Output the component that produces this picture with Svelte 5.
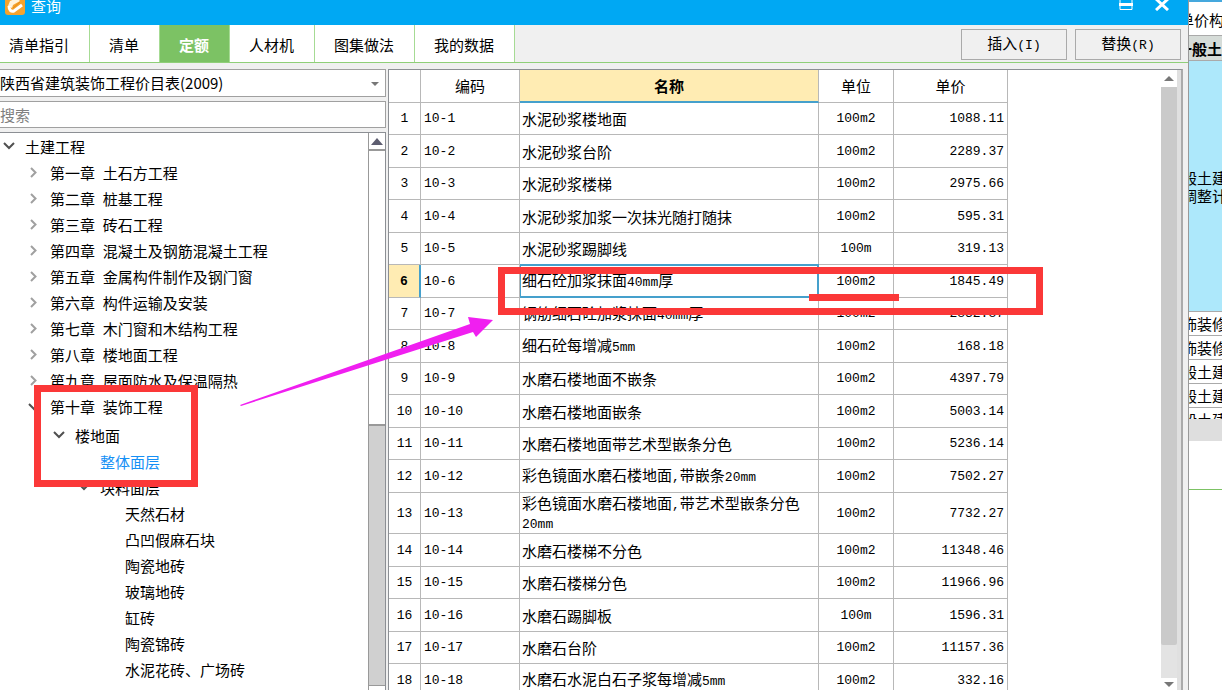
<script lang="ts">
  type Node = { label: string; open?: boolean; leaf?: boolean; children?: Node[] };

  const tabs = ['清单指引', '清单', '定额', '人材机', '图集做法', '我的数据'];
  let activeTab = $state('定额');
  let selectedNode = $state('整体面层');
  let selectedRow = $state(6);
  let search = $state('');

  let tree: Node[] = $state([
    {
      label: '土建工程',
      open: true,
      children: [
        { label: '第一章 土石方工程' },
        { label: '第二章 桩基工程' },
        { label: '第三章 砖石工程' },
        { label: '第四章 混凝土及钢筋混凝土工程' },
        { label: '第五章 金属构件制作及钢门窗' },
        { label: '第六章 构件运输及安装' },
        { label: '第七章 木门窗和木结构工程' },
        { label: '第八章 楼地面工程' },
        { label: '第九章 屋面防水及保温隔热' },
        {
          label: '第十章 装饰工程',
          open: true,
          children: [
            {
              label: '楼地面',
              open: true,
              children: [
                { label: '整体面层', leaf: true },
                {
                  label: '块料面层',
                  open: true,
                  children: [
                    { label: '天然石材', leaf: true },
                    { label: '凸凹假麻石块', leaf: true },
                    { label: '陶瓷地砖', leaf: true },
                    { label: '玻璃地砖', leaf: true },
                    { label: '缸砖', leaf: true },
                    { label: '陶瓷锦砖', leaf: true },
                    { label: '水泥花砖、广场砖', leaf: true },
                  ],
                },
              ],
            },
          ],
        },
      ],
    },
  ]);

  const rows = [
    { name: '水泥砂浆楼地面', unit: '100m2', price: '1088.11' },
    { name: '水泥砂浆台阶', unit: '100m2', price: '2289.37' },
    { name: '水泥砂浆楼梯', unit: '100m2', price: '2975.66' },
    { name: '水泥砂浆加浆一次抹光随打随抹', unit: '100m2', price: '595.31' },
    { name: '水泥砂浆踢脚线', unit: '100m', price: '319.13' },
    { name: '细石砼加浆抹面40mm厚', unit: '100m2', price: '1845.49' },
    { name: '钢筋细石砼加浆抹面40mm厚', unit: '100m2', price: '2832.87' },
    { name: '细石砼每增减5mm', unit: '100m2', price: '168.18' },
    { name: '水磨石楼地面不嵌条', unit: '100m2', price: '4397.79' },
    { name: '水磨石楼地面嵌条', unit: '100m2', price: '5003.14' },
    { name: '水磨石楼地面带艺术型嵌条分色', unit: '100m2', price: '5236.14' },
    { name: '彩色镜面水磨石楼地面,带嵌条20mm', unit: '100m2', price: '7502.27' },
    { name: '彩色镜面水磨石楼地面,带艺术型嵌条分色20mm', unit: '100m2', price: '7732.27' },
    { name: '水磨石楼梯不分色', unit: '100m2', price: '11348.46' },
    { name: '水磨石楼梯分色', unit: '100m2', price: '11966.96' },
    { name: '水磨石踢脚板', unit: '100m', price: '1596.31' },
    { name: '水磨石台阶', unit: '100m2', price: '11157.36' },
    { name: '水磨石水泥白石子浆每增减5mm', unit: '100m2', price: '332.16' },
  ];

  // half-width runs get the mono face, the rest stays in the CJK one
  function split(text: string) {
    return text.match(/[\x20-\x7e]+|[^\x20-\x7e]+/g) ?? [];
  }
</script>

{#snippet mixed(text: string)}
  {#each split(text) as part}{#if /^[\x20-\x7e]/.test(part)}<span class="half">{part}</span>{:else}{part}{/if}{/each}
{/snippet}

{#snippet branch(nodes: Node[])}
  <ul>
    {#each nodes as node}
      <li>
        <div class="node">
          {#if node.leaf}
            <span class="toggle"></span>
          {:else}
            <button class="toggle" class:open={node.open} aria-label="展开 {node.label}" onclick={() => (node.open = !node.open)}>
              <svg width="12" height="12" viewBox="0 0 12 12">
                {#if node.open}
                  <path d="M1 3 6 8 11 3" />
                {:else}
                  <path d="M3 1 7.5 5.5 3 10" />
                {/if}
              </svg>
            </button>
          {/if}
          <button class="label" class:selected={selectedNode === node.label} onclick={() => (selectedNode = node.label)}>
            {@render mixed(node.label)}
          </button>
        </div>
        {#if node.open && node.children}
          {@render branch(node.children)}
        {/if}
      </li>
    {/each}
  </ul>
{/snippet}

<div class="screen">
  <section class="dialog">
    <header class="titlebar">
      <svg class="logo" width="20" height="16" viewBox="0 4 20 16">
        <rect x="0" y="0" width="20" height="19" rx="3" fill="#f6a32c" />
        <path d="M3 10 5 5 12 2 15 5 8 9 7 12z" fill="#fff3dc" />
        <path d="M4 10C4 14 6 16 9 15L17 9" fill="none" stroke="#fff" stroke-width="3" />
        <path d="M8 12 15 6" stroke="#e58a1a" stroke-width="1" />
      </svg>
      <span class="title">查询</span>
      <div class="window-buttons">
        <button aria-label="最大化">
          <svg width="14" height="11" viewBox="0 0 14 11">
            <path d="M1 0V9.5H13V0" fill="none" stroke="#fff" stroke-width="1" />
            <path d="M0 4.5H14" stroke="#fff" stroke-width="3" />
          </svg>
        </button>
        <button aria-label="关闭">
          <svg width="14" height="11" viewBox="0 0 14 11">
            <path d="M1-1 13 10M13-1 1 10" stroke="#fff" stroke-width="3" />
          </svg>
        </button>
      </div>
    </header>

    <nav class="toolbar">
      {#each tabs as tab}
        <button class="tab" class:active={activeTab === tab} onclick={() => (activeTab = tab)}>{tab}</button>
      {/each}
      <div class="actions">
        <button>{@render mixed('插入(I)')}</button>
        <button>{@render mixed('替换(R)')}</button>
      </div>
    </nav>

    <div class="content">
      <aside class="sidebar">
        <div class="combo">
          <select aria-label="价目表">
            <option>陕西省建筑装饰工程价目表(2009)</option>
          </select>
          <svg width="8" height="5" viewBox="0 0 8 5"><path d="M0 0H8L4 4z" fill="#777" /></svg>
        </div>
        <input class="search" type="text" placeholder="搜索" aria-label="搜索" bind:value={search} />
        <div class="tree-box">
          <div class="tree">{@render branch(tree)}</div>
          <div class="tree-scroll">
            <button aria-label="向上滚动">
              <svg width="12" height="7" viewBox="0 0 12 7"><path d="M0 7 6 0 12 7z" fill="#5d5d70" /></svg>
            </button>
            <div class="tree-thumb"></div>
            <button class="down" aria-label="向下滚动"></button>
          </div>
        </div>
      </aside>

      <div class="grid">
        <div class="table-area">
          <table>
            <colgroup>
              <col class="c-num" />
              <col class="c-code" />
              <col class="c-name" />
              <col class="c-unit" />
              <col class="c-price" />
            </colgroup>
            <thead>
              <tr>
                <th></th>
                <th>编码</th>
                <th class="current">名称</th>
                <th>单位</th>
                <th>单价</th>
              </tr>
            </thead>
            <tbody>
              {#each rows as row, i}
                <tr class:selected={selectedRow === i + 1} onclick={() => (selectedRow = i + 1)}>
                  <td class="num half">{i + 1}</td>
                  <td class="half">10-{i + 1}</td>
                  <td class="name">{@render mixed(row.name)}</td>
                  <td class="unit half">{row.unit}</td>
                  <td class="price half">{row.price}</td>
                </tr>
              {/each}
            </tbody>
          </table>
        </div>
        <div class="grid-scroll">
          <button aria-label="表格向上滚动">
            <svg width="10" height="5" viewBox="0 0 10 5"><path d="M0 5 5 0 10 5z" fill="#777" /></svg>
          </button>
          <div class="grid-thumb"></div>
          <button class="down" aria-label="表格向下滚动">
            <svg width="10" height="5" viewBox="0 0 10 5"><path d="M0 0H10L5 5z" fill="#777" /></svg>
          </button>
        </div>
      </div>
    </div>
  </section>

  <section class="behind">
    <div class="b-head">单价构</div>
    <div class="b-group">一般土</div>
    <div class="b-current">
      <div>般土建</div>
      <div>调整计</div>
    </div>
    <div class="b-row">饰装修</div>
    <div class="b-row">饰装修</div>
    <div class="b-row">般土建</div>
    <div class="b-row">般土建</div>
    <div class="b-row cut">般土建</div>
    <div class="b-bar"></div>
    <div class="b-pane"></div>
  </section>

  <svg class="marks" width="1222" height="690" viewBox="0 0 1222 690">
    <g fill="none" stroke="#fb3838" stroke-width="7">
      <rect x="37.5" y="388.5" width="157" height="95" />
      <rect x="501.5" y="270.5" width="538" height="41" />
      <path d="M809 297.5H899" />
    </g>
    <path d="M240 405 385 354 470 324 468 317 493 320 476 337 473 332 385 360 241 406z" fill="#f01ff0" />
  </svg>
</div>

<style>
  :global(body) {
    overflow: hidden;
  }
  .screen {
    position: relative;
    display: flex;
    height: 100vh;
    overflow: hidden;
    background: #fff;
    color: #000;
    font-family: "Noto Sans CJK SC", sans-serif;
    font-size: 15px;
    line-height: 18px;
  }
  button,
  input,
  select {
    font: inherit;
    color: inherit;
    margin: 0;
    padding: 0;
    border: 0;
    border-radius: 0;
    background: none;
    outline: none;
  }
  svg {
    display: block;
  }
  .half {
    font-family: "Liberation Mono", "Noto Sans CJK SC", monospace;
    font-size: 13px;
    white-space: pre;
  }

  .dialog {
    flex: 1;
    min-width: 0;
    display: flex;
    flex-direction: column;
    background: #f0f0f0;
    border-right: 1px solid #999;
  }
  .titlebar {
    display: flex;
    align-items: flex-start;
    flex: none;
    height: 25px;
    padding: 0 19px 0 5px;
    background: #00a8f3;
    color: #fff;
  }
  .title {
    margin-left: 6px;
    line-height: 12px;
  }
  .window-buttons {
    display: flex;
    gap: 22px;
    margin-left: auto;
  }

  .toolbar {
    display: flex;
    flex: none;
    height: 37px;
    border-bottom: 1px solid #8fcf78;
  }
  .tab {
    padding: 2px 20px 0 19px;
    background: #fff;
    border-right: 1px solid #a6db94;
  }
  .tab:first-child {
    padding-left: 9px;
  }
  .tab.active {
    background: #7cc264;
    color: #fff;
    font-weight: bold;
  }
  .actions {
    display: flex;
    gap: 8px;
    margin: 4px 7px 2px auto;
  }
  .actions button {
    width: 106px;
    border: 1px solid #aaa;
  }

  .content {
    display: flex;
    flex: 1;
    min-height: 0;
    padding: 6px 5px 0 0;
  }
  .sidebar {
    display: flex;
    flex-direction: column;
    flex: none;
    width: 386px;
    gap: 4px;
  }
  .combo {
    position: relative;
    height: 28px;
    box-sizing: border-box;
    border: 1px solid #a0a0a0;
    border-left: 0;
    background: #fff;
  }
  .combo select {
    appearance: none;
    width: 100%;
    height: 100%;
  }
  .combo svg {
    position: absolute;
    right: 6px;
    top: 12px;
    pointer-events: none;
  }
  .search {
    height: 27px;
    box-sizing: border-box;
    border: 1px solid #a0a0a0;
    border-left: 0;
    background: #fff;
  }
  .search::placeholder {
    color: #808080;
    opacity: 1;
  }
  .tree-box {
    display: flex;
    flex: 1;
    min-height: 0;
    border: 1px solid #8c8f94;
    border-width: 1px 1px 0 0;
    background: #fff;
  }
  .tree {
    flex: 1;
    overflow: hidden;
  }
  ul {
    list-style: none;
    margin: 0;
    padding: 0;
  }
  ul ul {
    padding: 1px 0 0 25px;
  }
  ul ul ul {
    padding-top: 2px;
  }
  ul ul ul ul {
    padding-top: 0;
  }
  .node {
    display: flex;
    height: 26px;
  }
  .toggle {
    display: flex;
    align-items: center;
    flex: none;
    width: 25px;
    padding-left: 3px;
    box-sizing: border-box;
  }
  .toggle path {
    fill: none;
    stroke: #a0a0a0;
    stroke-width: 2;
  }
  .toggle.open path {
    stroke: #505050;
  }
  .label {
    padding-top: 2px;
    white-space: nowrap;
  }
  .label.selected {
    color: #1690f5;
  }
  .tree-scroll {
    display: flex;
    flex-direction: column;
    width: 16px;
    border-left: 1px solid #999;
    background: #d0d0d0;
  }
  .tree-scroll button {
    display: flex;
    align-items: center;
    justify-content: center;
    flex: none;
    height: 18px;
    background: #fff;
    border-bottom: 2px solid #999;
    box-sizing: border-box;
  }
  .tree-scroll .down {
    height: 5px;
    margin-top: auto;
    border: 1px solid #999;
    border-width: 1px 0 0;
  }
  .tree-thumb {
    height: 49%;
    background: #fff;
    border-bottom: 2px solid #999;
  }

  .grid {
    display: flex;
    flex: 1;
    min-width: 0;
    margin-left: 2px;
    border: 1px solid #8c8f94;
    border-bottom: 0;
    border-right: 2px solid #aaa;
    background: #fff;
  }
  .table-area {
    flex: 1;
    overflow: hidden;
  }
  table {
    width: 619px;
    table-layout: fixed;
    border-collapse: separate;
    border-spacing: 0;
  }
  .c-num {
    width: 32px;
  }
  .c-code {
    width: 99px;
  }
  .c-name {
    width: 299px;
  }
  .c-unit {
    width: 75px;
  }
  .c-price {
    width: 114px;
  }
  th,
  td {
    box-sizing: border-box;
    padding: 1px 3px 0;
    border: 1px solid #b8b8b8;
    border-width: 0 1px 1px 0;
    text-align: left;
  }
  th {
    height: 33px;
    padding: 0;
    font-weight: normal;
    text-align: center;
  }
  th.current {
    background: #ffecb3;
    border-bottom: 2px solid #45a0cc;
    font-weight: bold;
  }
  tr:nth-child(odd) td {
    height: 32px;
  }
  tr:nth-child(even) td {
    height: 33px;
  }
  tr:nth-child(13) td {
    height: 41px;
  }
  .name {
    padding: 1px 2px 0;
    line-height: 16px;
  }
  .num,
  .unit {
    text-align: center;
  }
  .price {
    text-align: right;
  }
  .selected .num {
    background: #ffecb3;
    border-right: 2px solid #45a0cc;
    font-weight: bold;
  }
  .selected .name {
    box-shadow: inset 1px 1px #45a0cc, 0 -1px #45a0cc;
    border-right: 2px solid #45a0cc;
    border-bottom: 2px solid #45a0cc;
  }
  .grid-scroll {
    display: flex;
    flex-direction: column;
    width: 16px;
    border-right: 4px solid #e0e0e0;
    background: #e3e3e3;
  }
  .grid-scroll button {
    display: flex;
    align-items: center;
    justify-content: center;
    flex: none;
    height: 17px;
    background: #fff;
  }
  .grid-scroll .down {
    height: 12px;
    margin-top: auto;
  }
  .grid-thumb {
    height: 90%;
    background: #cacaca;
    border-radius: 0 0 2px 2px;
  }

  .behind {
    display: flex;
    flex-direction: column;
    flex: none;
    width: 33px;
    overflow: hidden;
    white-space: nowrap;
    text-indent: -7px;
  }
  .behind > div {
    flex: none;
    box-sizing: border-box;
    overflow: hidden;
  }
  .b-head {
    height: 35px;
    border-top: 2px solid #45a8dd;
    text-indent: -10px;
    line-height: 35px;
  }
  .b-group {
    height: 26px;
    background: #d6dcd8;
    border: 1px solid #aaa;
    border-width: 1px 0;
    font-weight: bold;
    text-indent: -12px;
    line-height: 26px;
  }
  .b-current {
    display: flex;
    flex-direction: column;
    height: 251px;
    padding-top: 108px;
    background: #ade8fb;
    border-bottom: 1px solid #aaa;
  }
  .b-row {
    height: 24px;
    border-bottom: 1px solid #aaa;
    line-height: 24px;
  }
  .b-row.cut {
    height: 11px;
    border: 0;
  }
  .b-bar {
    height: 22px;
    background: #dedede;
  }
  .b-pane {
    height: 49px;
    border-bottom: 1px solid #7cc264;
  }

  .marks {
    position: absolute;
    top: 0;
    left: 0;
    pointer-events: none;
  }
</style>
